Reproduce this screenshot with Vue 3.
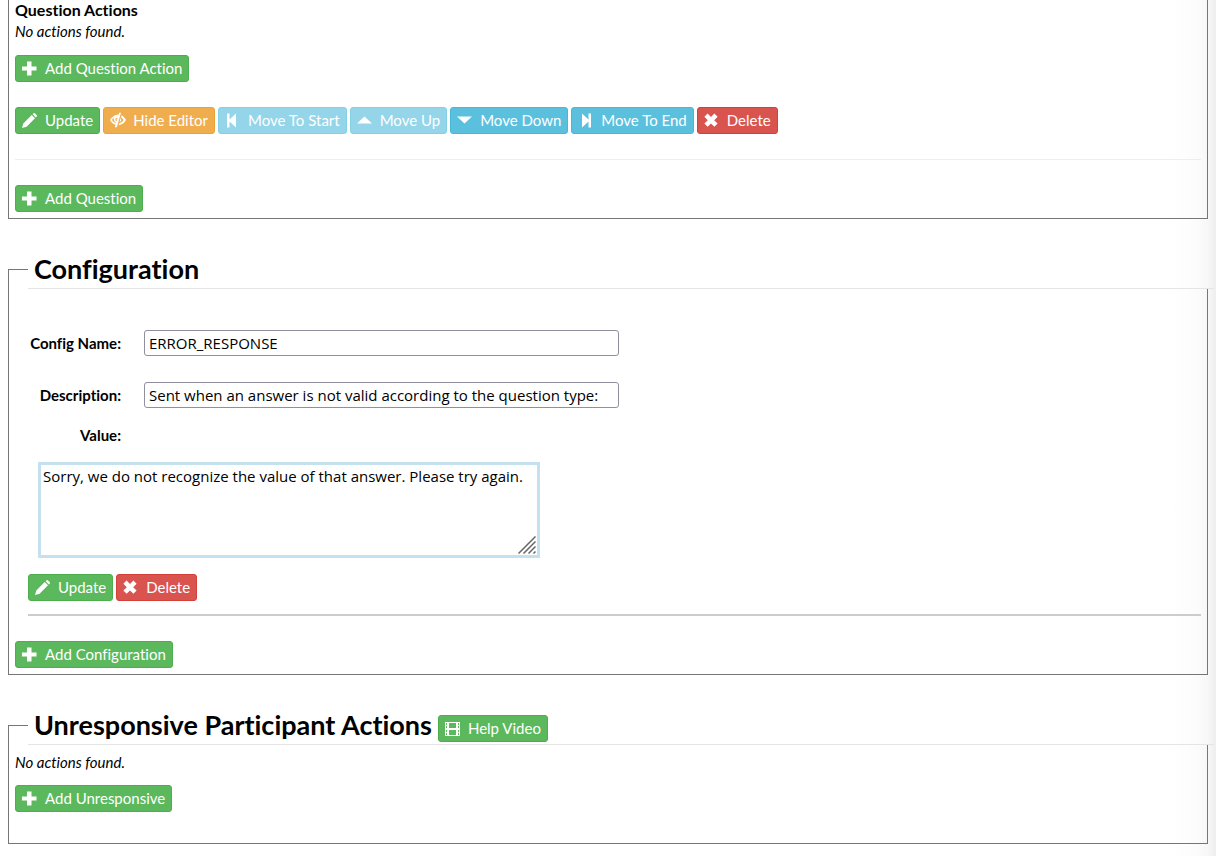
<template>
  <main class="page">
    <fieldset class="panel panel-first">
      <h3 class="sub-title">Question Actions</h3>
      <p class="empty">No actions found.</p>
      <div class="row add-action">
        <button type="button" class="btn green">
          <svg class="icon" viewBox="0 0 15 15"><path :d="icons.plus" /></svg>Add Question Action
        </button>
      </div>
      <div class="row">
        <button
          v-for="b in questionButtons"
          :key="b.label"
          type="button"
          class="btn"
          :class="b.color"
          :disabled="b.disabled"
        >
          <svg class="icon" viewBox="0 0 15 15"><path fill-rule="evenodd" :d="icons[b.icon]" /></svg>{{ b.label }}
        </button>
      </div>
      <hr class="thin" />
      <div class="row">
        <button type="button" class="btn green">
          <svg class="icon" viewBox="0 0 15 15"><path :d="icons.plus" /></svg>Add Question
        </button>
      </div>
    </fieldset>

    <fieldset class="panel">
      <legend>Configuration</legend>
      <div class="config">
        <div class="fields">
          <label for="config-name">Config Name:</label>
          <input id="config-name" v-model="config.name" type="text" />
          <label for="config-description">Description:</label>
          <input id="config-description" v-model="config.description" type="text" />
        </div>
        <label class="value-label" for="config-value">Value:</label>
        <div class="value-box">
          <textarea id="config-value" v-model="config.value"></textarea>
          <svg class="grip" viewBox="0 0 18 18">
            <path d="M0.5 17.5L17.5 0.5M5.5 17.5L17.5 5.5M10.5 17.5L17.5 10.5M15.5 17.5L17.5 15.5" />
          </svg>
        </div>
        <div class="row">
          <button type="button" class="btn green">
            <svg class="icon" viewBox="0 0 15 15"><path :d="icons.pencil" /></svg>Update
          </button>
          <button type="button" class="btn red">
            <svg class="icon" viewBox="0 0 15 15"><path :d="icons.remove" /></svg>Delete
          </button>
        </div>
        <hr class="thick" />
      </div>
      <div class="row">
        <button type="button" class="btn green">
          <svg class="icon" viewBox="0 0 15 15"><path :d="icons.plus" /></svg>Add Configuration
        </button>
      </div>
    </fieldset>

    <fieldset class="panel panel-last">
      <legend>
        <span>Unresponsive Participant Actions</span>
        <button type="button" class="btn green">
          <svg class="icon" viewBox="0 0 15 15"><path fill-rule="evenodd" :d="icons.film" /></svg>Help Video
        </button>
      </legend>
      <p class="empty">No actions found.</p>
      <div class="row add-action">
        <button type="button" class="btn green">
          <svg class="icon" viewBox="0 0 15 15"><path :d="icons.plus" /></svg>Add Unresponsive
        </button>
      </div>
    </fieldset>
  </main>
</template>

<script setup>
import { reactive } from 'vue';

const icons = {
  plus: 'M5 0.5H9.5V5.5H14.5V9.5H9.5V14.5H5V9.5H0V5.5H5Z',
  pencil: 'M0 15L1.3 10.4L9.7 2L13 5.3L4.6 13.7ZM10.6 1.2L11.6 0.2Q12.2 -0.3 12.8 0.2L14.8 2.2Q15.4 2.8 14.8 3.4L13.8 4.4Z',
  eye: 'M11 -0.3L6.8 14.3H4.8L5.5 11.8C2.9 11 1 9 0 7C1.6 4 4.6 1.7 8.6 1.5L9.2 -0.3ZM7.4 5C6.4 4.7 5.4 5.4 5.4 6.5C5.4 7.4 5.9 8.1 6.6 8.3L6.8 7.4C6.5 7.1 6.4 6.7 6.6 6.3L7.1 6.5ZM3.8 4.8C3 5.4 2.4 6.2 2 7C2.8 8.4 4 9.4 5.8 9.9L6 9.4C4.2 8.6 3.4 6.6 3.8 4.8ZM11.6 2.2C13.9 3.4 15.2 5.2 16 7C14.6 9.8 12.1 11.8 8.6 12.2L9.2 10.3C11.4 9.8 12.8 8.6 13.5 7C12.9 5.9 12.1 4.9 10.9 4.4ZM10.7 4.8C11.7 6.7 11.2 8.6 9.5 9.5Z',
  start: 'M2 0.5H4.5V6.5L11 0.5V14.5L4.5 8.5V14.5H2Z',
  up: 'M0 10.5L7.5 3.5L15 10.5Z',
  down: 'M0 3.5H15L7.5 10.5Z',
  end: 'M4 0.5L10.5 6.5V0.5H13V14.5H10.5V8.5L4 14.5Z',
  remove: 'M3.6 0.6L7 4L10.4 0.6L13.6 3.8L10.2 7.2L13.6 10.6L10.4 13.8L7 10.4L3.6 13.8L0.4 10.6L3.8 7.2L0.4 3.8Z',
  film: 'M0 1H15V15H0ZM1 2V4H2V2ZM1 5V7H2V5ZM1 9V11H2V9ZM1 12V14H2V12ZM4 2V7H11V2ZM4 9V14H11V9ZM13 2V4H14V2ZM13 5V7H14V5ZM13 9V11H14V9ZM13 12V14H14V12Z',
};

const questionButtons = [
  { label: 'Update', icon: 'pencil', color: 'green' },
  { label: 'Hide Editor', icon: 'eye', color: 'orange' },
  { label: 'Move To Start', icon: 'start', color: 'blue', disabled: true },
  { label: 'Move Up', icon: 'up', color: 'blue', disabled: true },
  { label: 'Move Down', icon: 'down', color: 'blue' },
  { label: 'Move To End', icon: 'end', color: 'blue' },
  { label: 'Delete', icon: 'remove', color: 'red' },
];

const config = reactive({
  name: 'ERROR_RESPONSE',
  description: 'Sent when an answer is not valid according to the question type:',
  value: 'Sorry, we do not recognize the value of that answer. Please try again.',
});
</script>

<style>
body {
  margin: 0;
  background: #fff;
}
</style>

<style scoped>
.page {
  box-sizing: border-box;
  min-height: 100vh;
  padding: 0 8px 12px;
  overflow: hidden;
  color: #000;
  font: 15px/21px Lato, "Liberation Sans", sans-serif;
  font-variant-ligatures: none;
  background: linear-gradient(to left, #eeeeee 0, #f7f7f7 8px, #fcfcfc 20px, #fff 48px);
}

.panel {
  min-width: 0;
  margin: 0 0 31px;
  padding: 0 6px 6px;
  border: 1px solid #767676;
}

.panel-first {
  border-top: 0;
}

.panel-last {
  margin-bottom: 0;
  padding-bottom: 31px;
}

legend {
  box-sizing: border-box;
  display: flex;
  align-items: center;
  gap: 6px;
  width: 100%;
  height: 39px;
  margin-left: 13px;
  padding: 0 0 0 6px;
  border-bottom: 1px solid #e5e5e5;
  font-size: 27px;
  font-weight: 700;
  line-height: 38px;
}

legend .btn {
  margin-top: 6px;
}

.sub-title {
  margin: 0;
  padding-bottom: 2px;
  font-size: 16px;
  font-weight: 700;
  line-height: 19px;
}

.empty {
  margin: 0;
  font-style: italic;
}

.panel-last .empty {
  margin-top: 7px;
}

.row {
  display: flex;
  flex-wrap: wrap;
  gap: 3px;
}

.add-action {
  margin: 13px 0 25px;
}

.panel-last .add-action {
  margin: 12px 0 0;
}

.btn {
  display: inline-flex;
  align-items: center;
  gap: 8px;
  height: 27px;
  box-sizing: border-box;
  padding: 0 6px;
  border: 1px solid;
  border-radius: 3px;
  color: #fff;
  font: 15px/21px Lato, "Liberation Sans", sans-serif;
  font-variant-ligatures: none;
  cursor: pointer;
}

.btn:disabled {
  opacity: 0.65;
  cursor: not-allowed;
}

.green {
  background: #5cb85c;
  border-color: #4cae4c;
}

.orange {
  background: #f0ad4e;
  border-color: #eea236;
}

.blue {
  background: #5bc0de;
  border-color: #46b8da;
}

.red {
  background: #d9534f;
  border-color: #d43f3a;
}

.icon {
  flex: none;
  width: 15px;
  height: 15px;
  overflow: visible;
  fill: currentColor;
}

hr {
  margin: 25px 0;
  border: 0;
}

.thin {
  border-top: 1px solid #eee;
}

.thick {
  margin-top: 13px;
  border-top: 2px solid #ccc;
}

.config {
  margin-top: 41px;
  padding-left: 13px;
}

.fields {
  display: grid;
  grid-template-columns: 93px minmax(0, 475px);
  gap: 26px 23px;
  align-items: center;
}

label {
  font-weight: 700;
  text-align: right;
}

input,
textarea {
  box-sizing: border-box;
  margin: 0;
  color: #000;
  font: 15px/20px "Trebuchet MS", "Open Sans", sans-serif;
  background: #fff;
}

input {
  width: 100%;
  height: 26px;
  padding: 0 4px;
  border: 1px solid #8f8f9d;
  border-radius: 3px;
}

.value-label {
  display: block;
  width: 93px;
  margin: 17px 0 16px;
}

.value-box {
  position: relative;
  max-width: 502px;
  margin: 0 0 16px 10px;
}

textarea {
  display: block;
  width: 100%;
  height: 96px;
  padding: 1px 2px;
  border: 3px solid #c5e1f0;
  resize: none;
  outline: 0;
}

.grip {
  position: absolute;
  right: 4px;
  bottom: 4px;
  width: 18px;
  height: 18px;
  fill: none;
  stroke: #666;
  stroke-width: 1.5;
}
</style>
